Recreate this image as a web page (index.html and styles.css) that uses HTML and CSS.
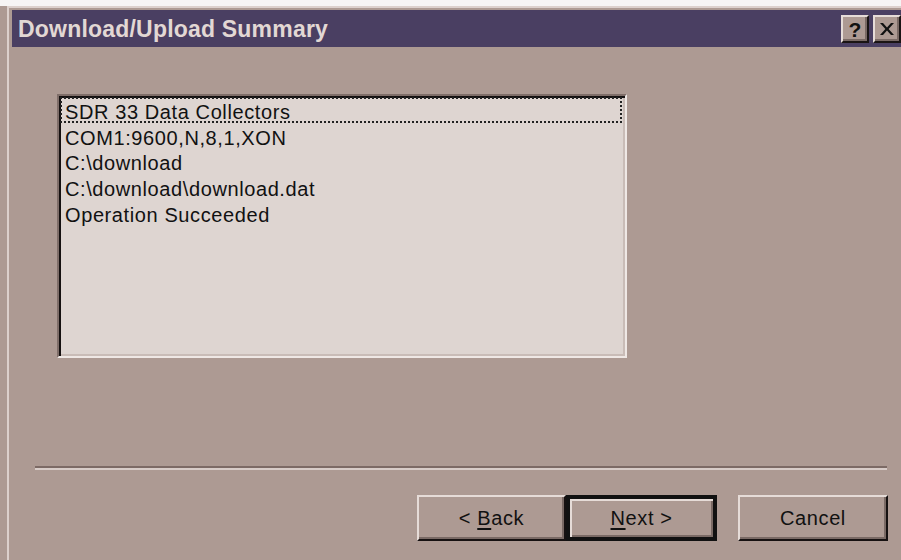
FILE: index.html
```html
<!DOCTYPE html>
<html>
<head>
<meta charset="utf-8">
<title>Download/Upload Summary</title>
<link rel="stylesheet" href="styles.css">
</head>
<body>
<div class="desk-strip"></div>
<div class="window">
  <div class="titlebar">
    <span class="title">Download/Upload Summary</span>
    <div class="caption-buttons">
      <button class="cap-btn help" type="button">?</button>
      <button class="cap-btn close" type="button" aria-label="Close">
        <svg width="14" height="12" viewBox="0 0 14 12">
          <path d="M0 0 H3 L7 4.5 L11 0 H14 L8.6 6 L14 12 H11 L7 7.5 L3 12 H0 L5.4 6 Z" fill="#111"/>
        </svg>
      </button>
    </div>
  </div>
  <div class="content">
    <div class="listbox">
      <div class="item focused">SDR 33 Data Collectors</div>
      <div class="item">COM1:9600,N,8,1,XON</div>
      <div class="item">C:\download</div>
      <div class="item">C:\download\download.dat</div>
      <div class="item">Operation Succeeded</div>
    </div>
    <div class="separator"></div>
    <div class="button-row">
      <button class="btn" type="button">&lt; <u>B</u>ack</button>
      <button class="btn default" type="button"><u>N</u>ext &gt;</button>
      <button class="btn cancel" type="button">Cancel</button>
    </div>
  </div>
</div>
</body>
</html>
```

FILE: styles.css
```css
html, body {
  margin: 0;
  padding: 0;
}

body {
  width: 901px;
  height: 560px;
  overflow: hidden;
  background: #ad9a93;
  font-family: "Liberation Sans", Arial, sans-serif;
  font-size: 20px;
  letter-spacing: 0.6px;
  color: #111;
}

.desk-strip {
  height: 6px;
  background: #f6f4f4;
}

.window {
  margin-left: 7px;
  width: 905px;
  height: 554px;
  box-sizing: border-box;
  border-top: 2px solid #dcd0cc;
  border-left: 2px solid #dcd0cc;
  padding: 2px 0 0 3px;
  background: #ad9a93;
}

.titlebar {
  width: 890px;
  height: 37px;
  box-sizing: border-box;
  background: #4a3f62;
  display: flex;
  align-items: center;
  justify-content: space-between;
  padding: 0 1px 0 6px;
}

.title {
  color: #e2d8d4;
  font-weight: bold;
  font-size: 23px;
  letter-spacing: 0.2px;
  margin-top: 2px;
}

.caption-buttons {
  display: flex;
  gap: 4px;
  margin-top: 1px;
}

.cap-btn {
  width: 28px;
  height: 28px;
  padding: 0;
  box-sizing: border-box;
  background: #ad9a93;
  border: 2px solid;
  border-color: #e6dcd8 #1a1414 #1a1414 #e6dcd8;
  box-shadow: inset -2px -2px #7a6a65;
  display: flex;
  align-items: center;
  justify-content: center;
  font-family: "Liberation Sans", Arial, sans-serif;
  font-weight: bold;
  font-size: 21px;
  color: #111;
  line-height: 1;
}

.content {
  display: flex;
  flex-direction: column;
  align-items: flex-start;
}

.listbox {
  margin: 47px 0 0 45px;
  width: 570px;
  height: 264px;
  box-sizing: border-box;
  background: #ded5d1;
  border: 2px solid;
  border-color: #7f6e69 #efe8e5 #efe8e5 #7f6e69;
  box-shadow: inset 2px 2px #151010, inset -2px -2px #c9bcb7;
  padding: 1px 3px 0 1px;
}

.item {
  height: 25.7px;
  line-height: 25px;
  padding: 3px 0 0 5px;
  box-sizing: border-box;
  white-space: nowrap;
}

.item.focused {
  outline: 2px dotted #222;
  outline-offset: -2px;
}

.separator {
  margin: 108px 0 0 23px;
  width: 852px;
  height: 0;
  border-top: 2px solid #7c6a65;
  border-bottom: 2px solid #d8ccc8;
}

.button-row {
  margin: 25px 0 0 405px;
  display: flex;
}

.btn {
  height: 46px;
  width: 149px;
  box-sizing: border-box;
  background: #ad9a93;
  border: 2px solid;
  border-color: #e6dcd8 #161111 #161111 #e6dcd8;
  box-shadow: inset -2px -2px #7a6a65;
  font-family: "Liberation Sans", Arial, sans-serif;
  font-size: 20px;
  letter-spacing: 0.6px;
  color: #111;
  padding: 0;
}

.btn u {
  text-decoration-thickness: 2px;
  text-underline-offset: 3px;
}

.btn.default {
  width: 151px;
  outline: 2px solid #111;
  outline-offset: -2px;
  border-width: 4px;
  border-color: #111;
  box-shadow: inset 2px 2px #e6dcd8, inset -2px -2px #7a6a65;
}

.btn.cancel {
  width: 150px;
  margin-left: 21px;
}
```
